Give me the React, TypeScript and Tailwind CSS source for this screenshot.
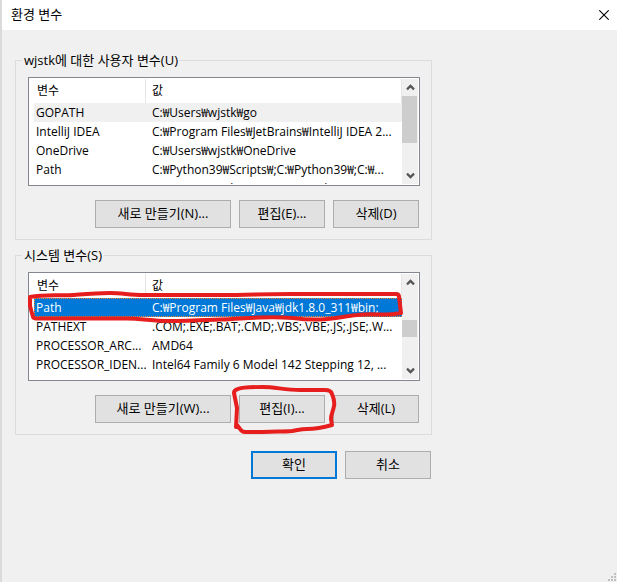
import { useId } from "react";

type Row = { name: string; value: string };

type GroupProps = {
  title: string;
  rows: Row[];
  highlight: "soft" | "selected";
  thumb: string;
  actions: string[];
};

const userRows: Row[] = [
  { name: "GOPATH", value: "C:₩Users₩wjstk₩go" },
  { name: "IntelliJ IDEA", value: "C:₩Program Files₩JetBrains₩IntelliJ IDEA 2..." },
  { name: "OneDrive", value: "C:₩Users₩wjstk₩OneDrive" },
  { name: "Path", value: "C:₩Python39₩Scripts₩;C:₩Python39₩;C:₩..." },
  { name: "TEMP", value: "C:₩Users₩wjstk₩AppData₩Local₩Temp" },
];

const systemRows: Row[] = [
  { name: "Path", value: "C:₩Program Files₩Java₩jdk1.8.0_311₩bin;" },
  { name: "PATHEXT", value: ".COM;.EXE;.BAT;.CMD;.VBS;.VBE;.JS;.JSE;.W..." },
  { name: "PROCESSOR_ARC...", value: "AMD64" },
  { name: "PROCESSOR_IDEN...", value: "Intel64 Family 6 Model 142 Stepping 12, ..." },
];

function Chevron({ down = false }: { down?: boolean }) {
  return (
    <svg width="9" height="7" viewBox="0 0 9 7" className={down ? "rotate-180" : ""} aria-hidden="true">
      <path d="M1 5.4 4.5 1.9 8 5.4" fill="none" stroke="#555" strokeWidth="2.2" />
    </svg>
  );
}

function PushButton({ label, wide = false, primary = false }: { label: string; wide?: boolean; primary?: boolean }) {
  return (
    <button
      type="button"
      className={`h-7 bg-[#e1e1e1] text-center text-[13px] whitespace-nowrap ${wide ? "w-[136px]" : "w-[86px]"} ${
        primary ? "border-2 border-[#0078d7]" : "border border-[#adadad]"
      }`}
    >
      {label}
    </button>
  );
}

function VariableGroup({ title, rows, highlight, thumb, actions }: GroupProps) {
  const id = useId();
  return (
    <fieldset className="min-w-0 border border-[#dcdcdc] pr-[11px] pb-[11px] pl-3">
      <legend id={id} className="-ml-1.5 px-0.5 text-[13px] leading-[19px]">
        {title}
      </legend>
      <div className="mt-[7px] flex h-[109px] justify-between border border-[#828790] bg-white p-px">
        <div className="ml-1 min-w-0 flex-1 overflow-hidden">
          <table aria-labelledby={id} className="w-full table-fixed border-separate border-spacing-0 text-left whitespace-nowrap">
            <thead>
              <tr className="h-6">
                <th className="w-28 border-r border-[#e5e5e5] p-0 pl-[3px] font-normal">변수</th>
                <th className="border-r border-[#e5e5e5] p-0 pl-1.5 font-normal">값</th>
              </tr>
            </thead>
            <tbody>
              {rows.map((row, i) => {
                const tone =
                  i > 0
                    ? ""
                    : highlight === "soft"
                      ? "bg-[#f0f0f0]"
                      : "bg-[#0078d7] text-white outline-1 -outline-offset-1 outline-dotted outline-[#ff8728]";
                return (
                  <tr key={row.name} className={`h-[19px] leading-[19px] ${tone}`}>
                    <td className="overflow-hidden p-0 pl-0.5">{row.name}</td>
                    <td className="overflow-hidden p-0 pl-1.5">{row.value}</td>
                  </tr>
                );
              })}
            </tbody>
          </table>
        </div>
        <div className="flex w-4 shrink-0 flex-col items-center bg-[#f0f0f0]">
          <button type="button" aria-label="위로" className="flex h-[17px] w-full items-center justify-center">
            <Chevron />
          </button>
          <div className="flex w-full flex-1 flex-col">
            <div className={`w-[15px] bg-[#cdcdcd] ${thumb}`} />
          </div>
          <button type="button" aria-label="아래로" className="flex h-[17px] w-full items-center justify-center">
            <Chevron down />
          </button>
        </div>
      </div>
      <div className="mt-3.5 flex justify-end gap-2 pr-px">
        {actions.map((label, i) => (
          <PushButton key={label} label={label} wide={i === 0} />
        ))}
      </div>
    </fieldset>
  );
}

export default function App() {
  return (
    <div className="relative flex min-h-screen flex-col border-l-2 border-[#dadada] bg-[#f0f0f0] font-['Open_Sans','Noto_Sans_CJK_KR',sans-serif] text-xs text-black">
      <header className="flex h-[30px] items-center justify-between bg-white pr-2 pl-[9px]">
        <h1 className="text-[13px]">환경 변수</h1>
        <button type="button" aria-label="닫기">
          <svg width="10" height="10" viewBox="0 0 10 10" aria-hidden="true">
            <path d="M0.3 0.3 9.7 9.7M9.7 0.3 0.3 9.7" stroke="#000" strokeWidth="1.1" />
          </svg>
        </button>
      </header>
      <main className="flex w-full max-w-[430px] flex-col gap-1.5 pt-[21px] pl-[13px]">
        <VariableGroup
          title="wjstk에 대한 사용자 변수(U)"
          rows={userRows}
          highlight="soft"
          thumb="h-[47px]"
          actions={["새로 만들기(N)...", "편집(E)...", "삭제(D)"]}
        />
        <VariableGroup
          title="시스템 변수(S)"
          rows={systemRows}
          highlight="selected"
          thumb="mt-[29px] h-[17px]"
          actions={["새로 만들기(W)...", "편집(I)...", "삭제(L)"]}
        />
        <div className="mt-2.5 flex justify-end gap-2 pr-px">
          <PushButton label="확인" primary />
          <PushButton label="취소" />
        </div>
      </main>
      <svg className="absolute right-0 bottom-0" width="10" height="10" viewBox="0 0 10 10" fill="#bfbfbf" aria-hidden="true">
        <path d="M7 1h2v2H7zM4 4h2v2H4zM7 4h2v2H7zM1 7h2v2H1zM4 7h2v2H4zM7 7h2v2H7z" />
      </svg>
      <svg
        className="pointer-events-none absolute top-0 -left-0.5"
        width="440"
        height="440"
        viewBox="0 0 440 440"
        fill="none"
        stroke="#e61e1e"
        strokeWidth="4"
        strokeLinecap="round"
        strokeLinejoin="round"
        aria-hidden="true"
      >
        <path d="M30 297C45 294 60 296 73 295S98 293 110 293S130 295 143 295S190 295 220 295S260 294 290 294S360 294 396 294Q399 294 399 297L401 313Q390 315 380 314.5Q365 314 357 315C345 316 335 319 320 319.5C308 320 300 319 293 318C280 317 270 317 260 317.5C245 318 236 319 220 319.5S180 321 167 321S140 318.5 127 318.5H40Q34 319 33 317L30 306Z" />
        <path d="M236 427L237 408L234 393Q234 390 238 389C243 387 257 387 263 387C275 387 285 390 300 390H325Q331 390 332 394Q335 401 334 406C333 412 331 414 331 419L332 425C325 427 315 429 307 429C302 429 298 430 292 431C282 432 275 431 263 432H245Q242 432 240 429L237 425" />
      </svg>
    </div>
  );
}
